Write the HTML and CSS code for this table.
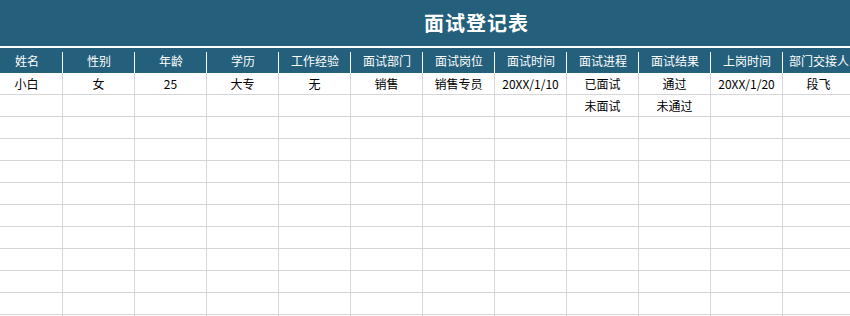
FILE: index.html
```html
<!DOCTYPE html>
<html lang="zh">
<head>
  <meta charset="UTF-8">
  <title>面试登记表</title>
  <meta name="viewport" content="width=device-width, initial-scale=1.0">
  <link rel="stylesheet" href="styles.css">
</head>
<body>
  <div class="sheet">
    <div class="title">面试登记表</div>

    <table class="grid">
      <colgroup>
        <col><col><col><col><col><col><col><col><col><col><col><col>
      </colgroup>
      <thead>
        <tr>
          <th>姓名</th>
          <th>性别</th>
          <th>年龄</th>
          <th>学历</th>
          <th>工作经验</th>
          <th>面试部门</th>
          <th>面试岗位</th>
          <th>面试时间</th>
          <th>面试进程</th>
          <th>面试结果</th>
          <th>上岗时间</th>
          <th>部门交接人</th>
        </tr>
      </thead>
      <tbody>
        <tr>
          <td>小白</td>
          <td>女</td>
          <td>25</td>
          <td>大专</td>
          <td>无</td>
          <td>销售</td>
          <td>销售专员</td>
          <td>20XX/1/10</td>
          <td>已面试</td>
          <td>通过</td>
          <td>20XX/1/20</td>
          <td>段飞</td>
        </tr>
        <tr>
          <td></td><td></td><td></td><td></td><td></td><td></td><td></td><td></td>
          <td>未面试</td>
          <td>未通过</td>
          <td></td><td></td>
        </tr>
        <tr><td></td><td></td><td></td><td></td><td></td><td></td><td></td><td></td><td></td><td></td><td></td><td></td></tr>
        <tr><td></td><td></td><td></td><td></td><td></td><td></td><td></td><td></td><td></td><td></td><td></td><td></td></tr>
        <tr><td></td><td></td><td></td><td></td><td></td><td></td><td></td><td></td><td></td><td></td><td></td><td></td></tr>
        <tr><td></td><td></td><td></td><td></td><td></td><td></td><td></td><td></td><td></td><td></td><td></td><td></td></tr>
        <tr><td></td><td></td><td></td><td></td><td></td><td></td><td></td><td></td><td></td><td></td><td></td><td></td></tr>
        <tr><td></td><td></td><td></td><td></td><td></td><td></td><td></td><td></td><td></td><td></td><td></td><td></td></tr>
        <tr><td></td><td></td><td></td><td></td><td></td><td></td><td></td><td></td><td></td><td></td><td></td><td></td></tr>
        <tr><td></td><td></td><td></td><td></td><td></td><td></td><td></td><td></td><td></td><td></td><td></td><td></td></tr>
        <tr><td></td><td></td><td></td><td></td><td></td><td></td><td></td><td></td><td></td><td></td><td></td><td></td></tr>
        <tr><td></td><td></td><td></td><td></td><td></td><td></td><td></td><td></td><td></td><td></td><td></td><td></td></tr>
      </tbody>
    </table>
  </div>
</body>
</html>
```

FILE: styles.css
```css
body {
  margin: 0;
  background: #fff;
  font-family: "Noto Sans CJK SC", "Noto Sans", sans-serif;
  overflow: hidden;
}

.sheet {
  width: 850px;
  height: 316px;
  overflow: hidden;
}

.title {
  height: 46px;
  border-bottom: 2px solid #fff;
  background-color: #245f7c;
  color: #fff;
  font-size: 20px;
  font-weight: bold;
  line-height: 46px;
  padding-left: 424px;
  letter-spacing: 1px;
}

/* sheet is scrolled a little to the right, first column is cut */
.grid {
  margin-left: -9px;
  width: 864px;
  table-layout: fixed;
  border-collapse: separate;
  border-spacing: 0;
  font-size: 12px;
}

.grid col {
  width: 72px;
}

.grid th {
  height: 25px;
  padding: 0;
  font-weight: normal;
  color: #fff;
  text-align: center;
  white-space: nowrap;
  /* white divider between header cells, leaves a strip on top */
  background: linear-gradient(#fff, #fff) right 4px / 1px 100% no-repeat, #245f7c;
}

.grid td {
  height: 21px;
  padding: 0;
  border-right: 1px solid #d6d6d6;
  border-bottom: 1px solid #d6d6d6;
  color: #000;
  text-align: center;
  white-space: nowrap;
}
```
